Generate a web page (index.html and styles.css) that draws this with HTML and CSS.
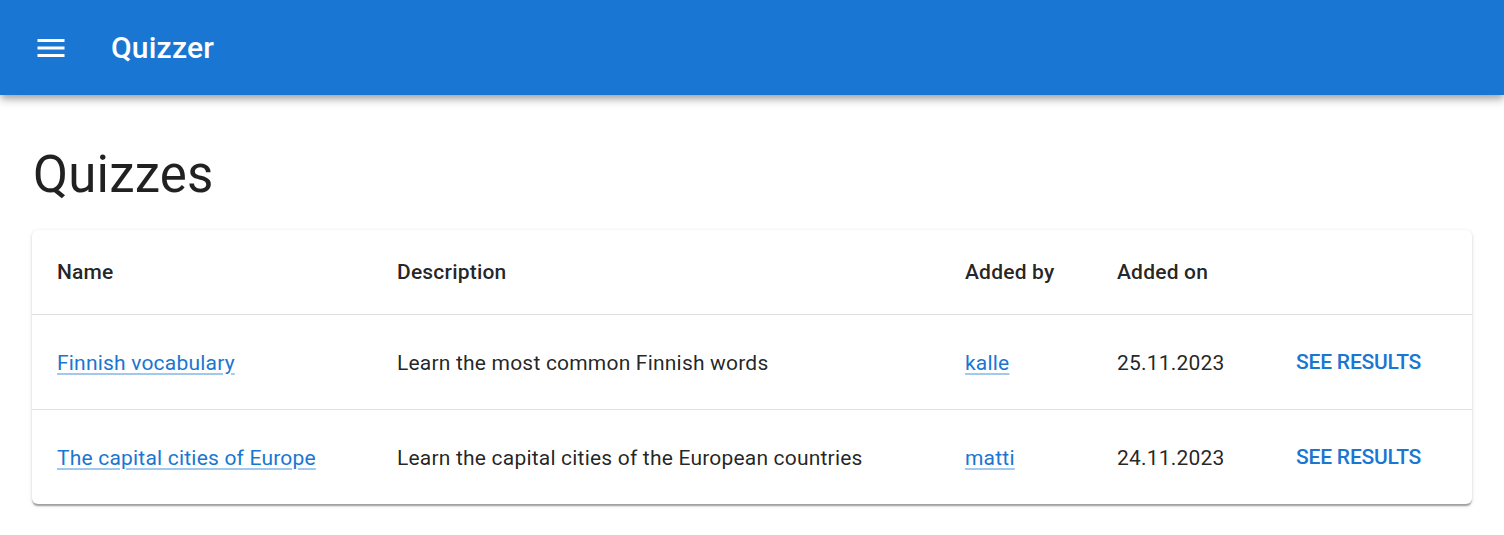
FILE: index.html
```html
<!DOCTYPE html>
<html lang="en">
<head>
<meta charset="utf-8">
<title>Quizzer</title>
<link rel="stylesheet" href="styles.css">
</head>
<body>
<header class="appbar">
  <button class="menu-btn" aria-label="menu">
    <svg viewBox="0 0 24 24" width="36" height="36"><path fill="#fff" d="M3 18h18v-2H3zm0-5h18v-2H3zm0-7v2h18V6z"/></svg>
  </button>
  <div class="brand">Quizzer</div>
</header>
<main class="container">
  <h1 class="page-title">Quizzes</h1>
  <div class="paper">
    <table class="quiz-table">
      <colgroup>
        <col class="c-name"><col class="c-desc"><col class="c-by"><col class="c-on"><col class="c-act">
      </colgroup>
      <thead>
        <tr>
          <th>Name</th>
          <th>Description</th>
          <th>Added by</th>
          <th>Added on</th>
          <th></th>
        </tr>
      </thead>
      <tbody>
        <tr>
          <td><a href="#" class="link">Finnish vocabulary</a></td>
          <td>Learn the most common Finnish words</td>
          <td><a href="#" class="link">kalle</a></td>
          <td>25.11.2023</td>
          <td class="act"><button class="text-btn">See results</button></td>
        </tr>
        <tr>
          <td><a href="#" class="link">The capital cities of Europe</a></td>
          <td>Learn the capital cities of the European countries</td>
          <td><a href="#" class="link">matti</a></td>
          <td>24.11.2023</td>
          <td class="act"><button class="text-btn">See results</button></td>
        </tr>
      </tbody>
    </table>
  </div>
</main>
</body>
</html>
```
FILE: styles.css
```css
* { box-sizing: border-box; }
html, body { margin: 0; padding: 0; }
body {
  font-family: Roboto, "Liberation Sans", Arial, sans-serif;
  color: rgba(0,0,0,0.87);
  background: #fff;
}
.appbar {
  height: 95px;
  background: #1976d2;
  color: #fff;
  display: flex;
  align-items: center;
  padding-left: 15px;
  box-shadow: 0 3px 6px -1.5px rgba(0,0,0,0.2), 0 6px 7.5px 0 rgba(0,0,0,0.14), 0 1.5px 15px 0 rgba(0,0,0,0.12);
  position: relative;
  z-index: 2;
}
.menu-btn {
  width: 72px;
  height: 72px;
  padding: 18px;
  border: 0;
  background: transparent;
  border-radius: 50%;
  display: flex;
  align-items: center;
  justify-content: center;
  margin-right: 24px;
  margin-top: 1px;
}
.menu-btn svg { display: block; }
.brand {
  font-size: 30px;
  font-weight: 500;
  letter-spacing: 0.2px;
  line-height: 1.6;
}
.container {
  padding: 48px 32px 24px;
}
.page-title {
  margin: 0 0 24px 1px;
  font-size: 51px;
  font-weight: 400;
  line-height: 63px;
  letter-spacing: 0.2px;
}
.paper {
  background: #fff;
  border-radius: 6px;
  box-shadow: 0 3px 1.5px -1.5px rgba(0,0,0,0.2), 0 1.5px 1.5px 0 rgba(0,0,0,0.14), 0 1.5px 4.5px 0 rgba(0,0,0,0.12);
  overflow: hidden;
}
.quiz-table {
  width: 100%;
  border-collapse: collapse;
  table-layout: fixed;
  font-size: 21px;
  letter-spacing: 0.2px;
}
.c-name { width: 340px; }
.c-desc { width: 568px; }
.c-by { width: 152px; }
.c-on { width: 168px; }
.c-act { width: 212px; }
.quiz-table th,
.quiz-table td {
  text-align: left;
  padding: 0 24px 0 25px;
  vertical-align: middle;
  border-bottom: 1.5px solid #e0e0e0;
  line-height: 30px;
  white-space: nowrap;
}
.quiz-table th {
  height: 84px;
  font-weight: 500;
  padding-top: 1px;
}
.quiz-table td {
  height: 95px;
  font-weight: 400;
  padding-top: 2px;
}
.quiz-table td.act { padding-left: 24px; }
.quiz-table tbody tr:last-child td { border-bottom: 0; }
.link {
  color: #1976d2;
  text-decoration: underline;
  text-decoration-color: rgba(25,118,210,0.4);
  text-decoration-thickness: 1.5px;
  text-underline-offset: 3px;
}
.text-btn {
  font-family: inherit;
  font-size: 21px;
  font-weight: 500;
  letter-spacing: -0.2px;
  text-transform: uppercase;
  color: #1976d2;
  background: transparent;
  border: 0;
  padding: 9px 12px;
  line-height: 1.75;
  border-radius: 6px;
}
```
